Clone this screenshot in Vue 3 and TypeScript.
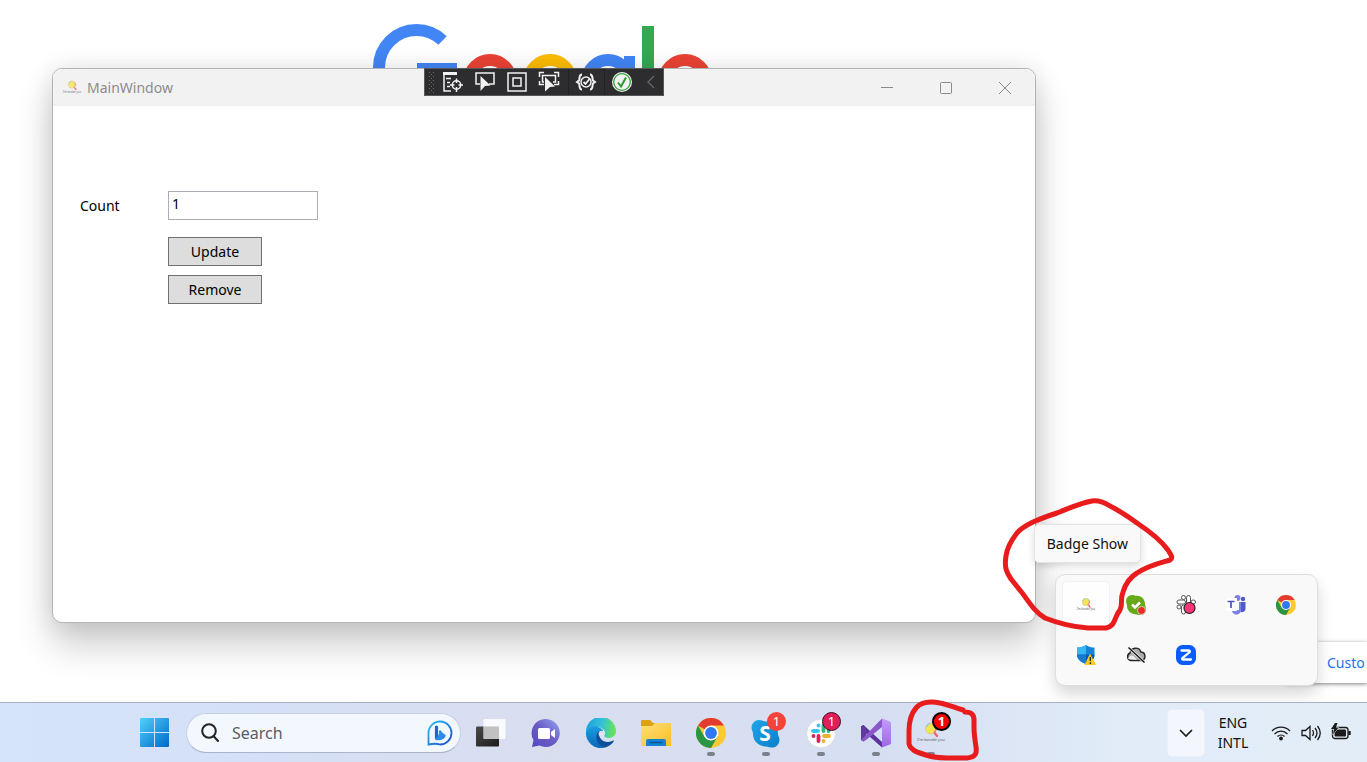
<script setup lang="ts">
import { ref } from 'vue'

const count = ref('1')
const applied = ref('1')

function update(): void {
  applied.value = count.value
}

function remove(): void {
  applied.value = ''
}
</script>

<template>
  <div class="screen">
    <svg class="defs" width="0" height="0" aria-hidden="true">
      <defs>
        <linearGradient id="gWin" x1="0" y1="0" x2="1" y2="1"><stop offset="0" stop-color="#4fd0fb" /><stop offset="1" stop-color="#0069c8" /></linearGradient>
        <linearGradient id="gBing" x1="0" y1="0" x2="1" y2="1"><stop offset="0" stop-color="#28c4ee" /><stop offset="1" stop-color="#1c49c9" /></linearGradient>
        <linearGradient id="gChat" x1="0" y1="1" x2="1" y2="0"><stop offset="0" stop-color="#5149c0" /><stop offset=".5" stop-color="#6c5cc6" /><stop offset="1" stop-color="#8fa6f3" /></linearGradient>
        <linearGradient id="gEdge" x1="0" y1=".3" x2="1" y2=".4"><stop offset="0" stop-color="#1f9fe0" /><stop offset=".55" stop-color="#35c3d6" /><stop offset="1" stop-color="#6be650" /></linearGradient>
        <linearGradient id="gEdgeB" x1="0" y1="0" x2="0" y2="1"><stop offset="0" stop-color="#1b9de2" /><stop offset="1" stop-color="#0b66b8" /></linearGradient>
        <linearGradient id="gFold" x1="0" y1="0" x2="1" y2="1"><stop offset="0" stop-color="#ffe07a" /><stop offset="1" stop-color="#fbbd25" /></linearGradient>
        <linearGradient id="gVs" x1="0" y1="0" x2="0" y2="1"><stop offset="0" stop-color="#c39bfa" /><stop offset="1" stop-color="#9c66e6" /></linearGradient>
        <linearGradient id="gSky" x1="0" y1="0" x2="1" y2="1"><stop offset="0" stop-color="#1fa5e8" /><stop offset="1" stop-color="#0a7fcb" /></linearGradient>
        <linearGradient id="gDark" x1="0" y1="0" x2="1" y2="1"><stop offset="0" stop-color="#4a4a4a" /><stop offset="1" stop-color="#1c1c1c" /></linearGradient>
      </defs>
      <symbol id="chrome" viewBox="0 0 30 30">
        <circle cx="15" cy="15" r="15" fill="#fcc934" />
        <path d="M15 15 2 7.500A15 15 0 0 1 28 7.500H15Z" fill="#e33b2e" />
        <path d="M2 7.500A15 15 0 0 0 15 30L21.500 18.700 15 15 8.500 18.700Z" fill="#2a9645" />
        <circle cx="15" cy="15" r="7.500" fill="#fff" />
        <circle cx="15" cy="15" r="5.900" fill="#2f78ee" />
      </symbol>
      <symbol id="lolly" viewBox="0 0 30 22">
        <path d="m18 10 3 4" stroke="#f0626c" stroke-width="2.200" stroke-linecap="round" />
        <circle cx="15" cy="6.500" r="5.500" fill="#f6e64d" stroke="#d8c7a0" />
        <path d="M19.500 4a5.500 5.500 0 0 1-2 7" fill="none" stroke="#ee7b86" stroke-width="1.500" />
        <path d="M10.500 5a5.500 5.500 0 0 1 3.500-3.800" fill="none" stroke="#8fcbe6" stroke-width="1.500" />
      </symbol>
    </svg>

    <main class="desktop">
      <svg class="wordmark" viewBox="0 0 340 92" role="img" aria-label="Google">
        <g fill="none" stroke-width="12">
          <circle cx="46.500" cy="57.500" r="37.500" stroke="#4285f4" pathLength="360" stroke-dasharray="0 120 194 46" />
          <circle cx="120" cy="71" r="21" stroke="#ea4335" />
          <circle cx="180" cy="71" r="21" stroke="#fbbc05" />
          <circle cx="238" cy="71" r="21" stroke="#4285f4" />
          <circle cx="315" cy="71" r="21" stroke="#ea4335" />
        </g>
        <rect x="47" y="53" width="40" height="12" fill="#4285f4" />
        <rect x="254" y="46" width="11" height="40" fill="#4285f4" />
        <rect x="272" y="16" width="12" height="76" fill="#34a853" />
      </svg>

      <section class="window" aria-label="MainWindow">
        <header class="titlebar">
          <svg class="app-icon" viewBox="0 0 30 22"><use href="#lolly" /><text class="motto" x="15" y="19">I'm beside you</text></svg>
          <h1>MainWindow</h1>
          <div class="caption">
            <button type="button" aria-label="Minimize"><svg viewBox="0 0 14 14"><path d="M1 6.500h12" /></svg></button>
            <button type="button" aria-label="Maximize"><svg viewBox="0 0 14 14"><rect x="1.500" y="1.500" width="11" height="11" rx="1" /></svg></button>
            <button type="button" aria-label="Close"><svg viewBox="0 0 14 14"><path d="m1 1 12 12M13 1 1 13" /></svg></button>
          </div>
          <div class="debugbar" role="toolbar" aria-label="Debug tools">
            <svg class="grip" viewBox="0 0 8 24"><path d="M1.500 2v22M5.500 2v22M3.500 4v20" stroke="#68686b" stroke-width="1" stroke-dasharray="1 3" /></svg>
            <button type="button" aria-label="Live visual tree">
              <svg viewBox="0 0 22 22"><path d="M1 1h14v3H1z" fill="#f2f2f2" stroke="none" /><path d="M2 2v18h7M4 7.500h5M5 11.500h3M5 15.500h3" /><circle cx="14.500" cy="14" r="4.200" /><path d="M14.500 7.500v4.500M14.500 16v5M8 14h4.500M16.500 14H21" /></svg>
            </button>
            <button type="button" aria-label="Select element">
              <svg viewBox="0 0 22 22"><path d="M6 13H2V2h18v11h-5" /><path d="m6.500 5 10 9.500-5.500.500-4.500 5z" fill="#f2f2f2" stroke="none" /></svg>
            </button>
            <button type="button" aria-label="Layout adorners">
              <svg viewBox="0 0 22 22"><rect x="2" y="2" width="18" height="18" /><rect x="7" y="7" width="8" height="8" /></svg>
            </button>
            <button type="button" aria-label="Track focused element">
              <svg viewBox="0 0 22 22"><path d="M1.500 6V1.500H6M16 1.500h4.500V6M1.500 10v3.500H6M20.500 10v3.500H16M6 11H4.500V4.500h13V11H15" /><path d="m7 6 10 9.500-5 .500-5 4.500z" fill="#f2f2f2" stroke="none" /></svg>
            </button>
            <i class="divider"></i>
            <button type="button" aria-label="Binding failures">
              <svg viewBox="0 0 22 22"><path d="M7 3.500C3.500 3.500 5 8 4 9.500L2 11l2 1.500c1 1.500-.500 6 3 6M15 3.500c3.500 0 2 4.500 3 6L20 11l-2 1.500c-1 1.500.500 6-3 6" stroke-width="2" /><circle cx="11" cy="11" r="5" /><path d="m8.500 11 2 2 4-5" stroke-width="1.800" /></svg>
            </button>
            <i class="divider"></i>
            <button type="button" aria-label="Hot reload">
              <svg viewBox="0 0 22 22"><circle cx="11" cy="11" r="10" fill="#f2f2f2" stroke="none" /><circle cx="11" cy="11" r="8.300" stroke="#35a13b" stroke-width="1.300" /><path d="m7 11.500 3 4 5-9" stroke="#2d9633" stroke-width="2" /></svg>
            </button>
            <button type="button" class="narrow" aria-label="Collapse toolbar">
              <svg viewBox="0 0 22 22"><path d="m14 5-6 6 6 6" stroke="#68686b" stroke-width="1.300" /></svg>
            </button>
          </div>
        </header>
        <form class="form" @submit.prevent="update">
          <label for="count">Count</label>
          <input id="count" v-model="count" type="text" />
          <button type="submit">Update</button>
          <button type="button" @click="remove">Remove</button>
        </form>
      </section>

      <a class="customize" href="#">Custo</a>

      <section class="tray" aria-label="Hidden icons">
        <button type="button" class="active" aria-label="Badge Show"><svg viewBox="0 0 30 22"><use href="#lolly" /><text class="motto" x="15" y="19">I'm beside you</text></svg></button>
        <button type="button" aria-label="Skype">
          <svg viewBox="0 0 20 20"><path d="M6 0c2 0 3 .8 5 .8 5 0 8 4 8 8.200 0 2 1 3 1 5.500a5.500 5.500 0 0 1-6 5.500c-2 0-2.500-.8-4.500-.8C5 19.200 1 15.500 1 11 1 9 0 8 0 6a6 6 0 0 1 6-6Z" fill="#68a919" /><path d="m6 9.500 3 3L14 7.500" fill="none" stroke="#fff" stroke-width="2.500" /><circle cx="15.500" cy="15.500" r="4" fill="#e82c2c" stroke="#d8e6c3" stroke-width=".8" /></svg>
        </button>
        <button type="button" aria-label="Slack">
          <svg viewBox="0 0 20 20"><g fill="#fff" stroke="#555" stroke-width="1"><rect x="5.500" y=".500" width="4" height="4" rx="2" /><rect x="1" y="5" width="8.500" height="4" rx="2" /><rect x="10.500" y=".500" width="4" height="8.500" rx="2" /><rect x="15" y="5" width="4.500" height="4" rx="2" /><rect x="1" y="10" width="4" height="4" rx="2" /><rect x="5.500" y="10" width="4" height="9" rx="2" /></g><circle cx="13.500" cy="13" r="5.500" fill="#fb3679" stroke="#222" stroke-width="1.200" /></svg>
        </button>
        <button type="button" aria-label="Teams">
          <svg viewBox="0 0 20 20"><circle cx="17" cy="4" r="2.200" fill="#5059c9" /><circle cx="11.500" cy="3" r="3" fill="#7b83eb" /><path d="M14 7h5.500v7a3.500 3.500 0 0 1-4.500 3z" fill="#5059c9" /><path d="M6 7h9v7a4.500 4.500 0 0 1-9 2z" fill="#7b83eb" /><path d="M10 6h3v9H9z" fill="#fff" /><rect width="11" height="13" y="3" rx="1" fill="#fff" /><path d="M1.500 6.500h7M5 6.500V13" stroke="#4b53bc" stroke-width="1.700" /></svg>
        </button>
        <button type="button" aria-label="Chrome"><svg viewBox="0 0 30 30"><use href="#chrome" /></svg></button>
        <button type="button" aria-label="Windows Security">
          <svg viewBox="0 0 20 20"><path d="M10 0c3 2 5.500 2.500 8.500 2.500v7c0 5-4 8-8.500 9.500C5.500 17.500 1 14.500 1 9.500v-7C4 2.500 7 2 10 0Z" fill="#1683d9" /><path d="M10 0v9.500H1v-7C4 2.500 7 2 10 0Z" fill="#35b6f0" /><path d="M10 9.500v9.500C5.500 17.500 1 14.500 1 9.500z" fill="#1579d0" /><path d="M10 9.500h8.500c0 5-4 8-8.500 9.500z" fill="#0759a7" /><path d="m14 8.500 6 11.500H8.500z" fill="#fdc81b" /><path d="M14.300 12v4M14.300 17.300V19" stroke="#222" stroke-width="1.300" /></svg>
        </button>
        <button type="button" aria-label="OneDrive">
          <svg viewBox="0 0 20 20"><path d="M4.500 15.500a4 4 0 0 1-.500-7.500C5 2 13 1.500 15 7a4.300 4.300 0 0 1 .500 8.500z" fill="#ababab" stroke="#222" stroke-width="1.400" /><path d="M2 14c3-6 6-3 9 1z" fill="#ececec" /><path d="m2.500 2.500 16 15" stroke="#f5f5f5" stroke-width="3" /><path d="m2.500 2.500 16 15" stroke="#111" stroke-width="1.400" /></svg>
        </button>
        <button type="button" aria-label="Zoom">
          <svg viewBox="0 0 20 20"><rect width="20" height="20" rx="6.500" fill="#0b5cff" /><path d="M5.500 5.500h7.500q1.500.500.500 1.800L6.500 13q-1 1.500.500 1.500H15" fill="none" stroke="#fff" stroke-width="2.300" stroke-linecap="round" /></svg>
        </button>
      </section>

      <div class="tooltip" role="tooltip">Badge Show</div>

      <svg class="scribble" viewBox="0 0 177 136" aria-hidden="true">
        <path d="M92 5C80 7 70 12 57 17C47 20 40 23 33 26C25 30 20 33 17 37C10 46 7 52 6 60C4 72 7 77 11 83L23 98C31 109 36 117 45 122C60 128 75 131 88 132H106C116 130 114 121 120 114C123 108 120 103 123 96C126 86 132 80 137 77C149 69 160 67 170 64C174 61 170 58 168 54C160 43 149 35 137 27C126 19 118 14 110 10Q101 4 92 5Z" />
      </svg>
    </main>

    <footer class="taskbar">
      <nav class="apps" aria-label="Taskbar">
        <button type="button" class="start" aria-label="Start">
          <svg viewBox="0 0 29 29"><path d="M1 0h13v14H0V1q0-1 1-1ZM15 0h13q1 0 1 1v13H15ZM0 15h14v14H1q-1 0-1-1ZM15 15h14v13q0 1-1 1H15Z" fill="url(#gWin)" /></svg>
        </button>
        <div class="search">
          <svg class="glass" viewBox="0 0 20 20"><circle cx="9" cy="8" r="6.800" /><path d="m13.500 13 4.500 5" stroke-linecap="round" /></svg>
          <input type="search" placeholder="Search" aria-label="Search" />
          <svg class="bing" viewBox="0 0 26 26"><path d="M1.500 24.500V13A11.500 11.500 0 1 1 13 24.500Q9 23 1.500 24.500Z" fill="#f2f8ff" stroke="url(#gBing)" stroke-width="1.800" /><path d="M9.500 7v11" fill="none" stroke="#1c62dc" stroke-width="3.200" stroke-linecap="round" /><path d="M13 11.500q1 2.500 4.500 4-1 4-8 3.500" fill="#2b8be9" stroke="#2b8be9" stroke-width="2.400" stroke-linejoin="round" stroke-linecap="round" /></svg>
        </div>
        <button type="button" aria-label="Task view">
          <svg viewBox="0 0 30 30"><rect x="0" y="8.500" width="23" height="20" rx="1" fill="url(#gDark)" /><rect x="7.500" y="1" width="22" height="20" rx="1" fill="#fff" fill-opacity=".85" /><path d="M7.500 8.500H23V21H7.500z" fill="#b9b9b9" fill-opacity=".8" /></svg>
        </button>
        <button type="button" aria-label="Chat">
          <svg viewBox="0 0 30 30"><path d="M15 1a14 14 0 1 1-6.500 26.500L1 29l1.500-7A14 14 0 0 1 15 1Z" fill="url(#gChat)" /><rect x="7" y="10" width="12" height="11" rx="1.500" fill="#fff" /><path d="m20 14 4-3v9l-4-3z" fill="#fff" /></svg>
        </button>
        <button type="button" aria-label="Edge">
          <svg viewBox="0 0 30 30"><path d="M0 14A15 15 0 0 1 30 13.500c0 4-3.500 6.500-7.500 6.500-3 0-5.500-1-4-3 2-3-1-7-5-7.500C8 8.500 2 11 0 14Z" fill="url(#gEdge)" /><path d="M0 14C2 9.500 8 7.500 12 9c3 1 5 3 5 4-5 0-7.500 5-5 10 1.500 3.500 5 6 7 6.500A15 15 0 0 1 0 14Z" fill="url(#gEdgeB)" /><path d="M13 13c-5 4-3 15 6 16.500 4-1 7-3.500 9-6.500 0-1-1-.5-2 0-6 2.500-14 0-13-10Z" fill="#0d4f9b" /><path d="M12.500 16c.500-3 3-4 5-2.500 1.500 1.500 1.200 3 .700 4-.700 2 2 3.500 5.800 2.800-4.500 1.500-10 .200-11.500-4.300Z" fill="#dbe3f4" /></svg>
        </button>
        <button type="button" aria-label="File Explorer">
          <svg viewBox="0 0 30 30"><path d="M0 3q0-1 1-1h8l3 3h17q1 0 1 1v5H0z" fill="#dda112" /><path d="M0 8h11l3-3h16v23H0z" fill="url(#gFold)" /><path d="M5 28v-5q0-2 2-2h16q2 0 2 2v5z" fill="#1381d4" /><path d="M8.500 24.500h13" stroke="#075795" stroke-width="1.500" /></svg>
        </button>
        <button type="button" class="running" aria-label="Chrome"><svg viewBox="0 0 30 30"><use href="#chrome" /></svg></button>
        <button type="button" class="running" aria-label="Skype">
          <svg viewBox="0 0 30 30"><path d="M8 2c3 0 4 1.500 7 1.500A12.500 12.500 0 0 1 27 16c0 2 1.500 3.500 1.500 6a7.500 7.500 0 0 1-8.500 7.500c-2 0-3-1-5.500-1A12.500 12.500 0 0 1 2 16c0-2.500-1.500-4-1.500-6.500A7.500 7.500 0 0 1 8 2Z" fill="url(#gSky)" /><text x="14" y="23" text-anchor="middle" class="s-mark">S</text></svg>
          <span class="badge skype">1</span>
        </button>
        <button type="button" class="running" aria-label="Slack">
          <svg viewBox="0 0 30 30"><circle cx="15" cy="15.500" r="14.300" fill="#fff" stroke="#d9d9df" stroke-width=".7" /><g stroke-width="3.800" stroke-linecap="round"><path d="M7 13h5M12.500 7.500v.1" stroke="#36c5f0" /><path d="M17.500 7.500V13M22.500 13v.1" stroke="#2eb67d" /><path d="M18 18h5M17.500 23v.1" stroke="#ecb22e" /><path d="M12.500 18v5M7.500 18v.1" stroke="#e01e5a" /></g></svg>
          <span class="badge slack">1</span>
        </button>
        <button type="button" class="running" aria-label="Visual Studio">
          <svg viewBox="0 0 30 30"><path d="M0 8.500 2.500 7 21 24v5.500L0 11z" fill="#5e33a0" /><path d="M0 8.500v13.500L2.500 23.500 5 21V9.500L2.500 7Z" fill="#603aa2" /><path d="M2.500 23.500 0 22 21 .500V9L5 22Z" fill="#8a59c9" /><path d="m21 .500 8 3q1 .5 1 1.500v20q0 1-1 1.500l-8 3z" fill="url(#gVs)" /></svg>
        </button>
        <button type="button" class="running" aria-label="MainWindow">
          <svg class="beside" viewBox="0 0 30 22"><use href="#lolly" /><text class="motto" x="15" y="19">I'm beside you</text></svg>
          <span class="badge own">1</span>
          <svg class="circled" viewBox="0 0 78 66" aria-hidden="true"><path d="M60 13C50 10 43 7 37 6C24 3 16 7 13 11C7 18 6 26 6 34V47C8 55 18 56 26 59C38 62 52 61 64 61C73 60 74 56 73 50C72 43 71 37 71 31V23C71 17 68 15 62 15" /></svg>
        </button>
      </nav>
      <div class="status">
        <button type="button" class="chevron" aria-label="Show hidden icons"><svg viewBox="0 0 16 16"><path d="m2 5 6 6 6-6" /></svg></button>
        <button type="button" class="lang">ENG<br />INTL</button>
        <button type="button" class="system" aria-label="Network, volume, battery">
          <svg viewBox="0 0 20 20"><path d="M1 8a12.500 12.500 0 0 1 18 0M3.500 11a9 9 0 0 1 13 0M6.500 13.500a5 5 0 0 1 7 0" /><circle cx="10" cy="15.500" r="1.900" fill="#1b1b1b" stroke="none" /></svg>
          <svg viewBox="0 0 20 20"><path d="M1 7.500h3.500L9 3.500v13l-4.500-4H1zM11.500 7q2 3 0 6M14 5q4 5 0 10M16.500 3q5.500 7 0 14" /></svg>
          <svg viewBox="0 0 20 20"><rect x="1.500" y="4.500" width="15.500" height="11" rx="2.500" /><rect x="3.500" y="6.500" width="11.500" height="7" rx="1" fill="#1b1b1b" stroke="none" /><path d="M18.500 8v4" stroke-width="2.400" /><path d="M4 0 0 6h3l-1 5.500L7.500 4.500H5L6.500 0Z" fill="#1b1b1b" stroke="#e1ecf8" stroke-width="1" paint-order="stroke" /></svg>
        </button>
      </div>
    </footer>
  </div>
</template>

<style>
body {
  margin: 0;
}
</style>

<style scoped>
.screen {
  display: flex;
  flex-direction: column;
  min-height: 100vh;
  overflow: hidden;
  background: #fff;
  color: #111;
  font: 14px/20px "Noto Sans", "Open Sans", sans-serif;
}
.screen * {
  box-sizing: border-box;
}
button,
input {
  font: inherit;
  color: inherit;
  margin: 0;
}
button {
  padding: 0;
  border: 0;
  background: none;
}
svg {
  display: block;
}
.defs {
  position: absolute;
}
.motto {
  font-size: 4px;
  fill: #555;
  text-anchor: middle;
}
.desktop {
  position: relative;
  flex: 1;
}
.wordmark {
  position: absolute;
  left: 370px;
  top: 10px;
  width: 340px;
}
.window {
  position: absolute;
  inset: 68px 331px 79px 52px;
  border: 1px solid #b4b4b4;
  border-radius: 10px;
  background: #fff;
  box-shadow: 0 22px 36px rgba(0, 0, 0, 0.2), 0 0 24px rgba(0, 0, 0, 0.1);
}
.titlebar {
  position: relative;
  display: flex;
  align-items: center;
  height: 37px;
  padding-left: 9px;
  border-radius: 9px 9px 0 0;
  background: #f2f2f2;
}
.app-icon {
  width: 20px;
  height: 15px;
  opacity: 0.8;
}
h1 {
  margin: 0 0 0 5px;
  font-size: 14px;
  font-weight: 400;
  color: #8d8d8d;
}
.caption {
  display: flex;
  align-self: stretch;
  margin-left: auto;
  margin-right: 1px;
}
.caption button {
  display: grid;
  place-items: center;
  width: 59px;
}
.caption svg {
  width: 14px;
  height: 14px;
  fill: none;
  stroke: #8a8a8a;
}
.debugbar {
  position: absolute;
  top: -1px;
  left: 50%;
  display: flex;
  align-items: center;
  width: 240px;
  height: 28px;
  padding-left: 3px;
  border: 1px solid #58585b;
  background: #2d2d30;
  transform: translateX(-50%);
}
.debugbar .grip {
  flex: none;
  width: 8px;
  height: 24px;
  margin-right: 1px;
}
.debugbar button {
  display: grid;
  place-items: center;
  width: 32px;
  flex: none;
}
.debugbar button svg {
  width: 22px;
  height: 22px;
  fill: none;
  stroke: #f2f2f2;
  stroke-width: 1.500;
}
.debugbar .narrow {
  width: 26px;
}
.divider {
  flex: none;
  width: 1px;
  height: 26px;
  margin: 0 1px 0 3px;
  background: #222224;
}
.divider ~ .divider {
  margin-left: 2px;
}
.form {
  display: grid;
  grid-template-columns: 88px 150px;
  justify-content: start;
  padding: 85px 27px;
  color: #000;
}
.form label {
  align-self: center;
}
.form input {
  height: 29px;
  padding: 0 3px 5px;
  border: 1px solid #abadb3;
  border-radius: 0;
  background: #fff;
  outline: 0;
}
.form button {
  grid-column: 2;
  width: 94px;
  height: 29px;
  margin-top: 9px;
  border: 1px solid #707070;
  background: #ddd;
}
.form input + button {
  margin-top: 17px;
}
.customize {
  position: absolute;
  right: 0;
  bottom: 19px;
  width: 80px;
  padding: 11px 0 10px 40px;
  background: #fff;
  box-shadow: 0 1px 4px rgba(0, 0, 0, 0.5);
  color: #1a73e8;
  text-decoration: none;
}
.tray {
  position: absolute;
  right: 49px;
  bottom: 16px;
  display: grid;
  grid-template-columns: repeat(5, 50px);
  grid-auto-rows: 50px;
  padding: 5px 6px 5px 5px;
  border: 1px solid #dedede;
  border-radius: 10px;
  background: #f9f9f9;
  box-shadow: 0 8px 16px rgba(0, 0, 0, 0.16);
}
.tray button {
  display: grid;
  place-items: center;
  margin: 1px;
  border: 1px solid transparent;
  border-radius: 5px;
}
.tray .active {
  border-color: #f1f1f1;
  background: #fefefe;
}
.tray svg {
  width: 20px;
  height: 20px;
}
.tooltip {
  position: absolute;
  right: 226px;
  bottom: 139px;
  padding: 9px 12px 8px;
  border: 1px solid #e4e4e4;
  border-radius: 5px;
  background: #f9f9f9;
  box-shadow: 0 3px 7px rgba(0, 0, 0, 0.15);
}
.scribble {
  position: absolute;
  right: 190px;
  bottom: 70px;
  width: 177px;
  height: 136px;
}
.scribble path,
.circled path {
  fill: none;
  stroke: #e81c1c;
  stroke-width: 5;
  stroke-linecap: round;
  stroke-linejoin: round;
}
.taskbar {
  position: relative;
  display: flex;
  justify-content: space-between;
  height: 60px;
  padding: 0 12px 0 127px;
  border-top: 1px solid #a9afbf;
  background: linear-gradient(90deg, #d5e4fb 0%, #d5e0f6 20%, #d9deef 40%, #d6dff2 65%, #e1ecf8 82%, #e2edf8 100%);
}
.apps {
  display: flex;
  align-items: center;
}
.apps button {
  position: relative;
  display: grid;
  place-items: center;
  width: 55px;
  height: 59px;
}
.apps button > svg {
  width: 30px;
  height: 30px;
}
.apps .start {
  justify-items: start;
  width: 59px;
  padding-left: 13px;
}
.apps .start > svg {
  width: 29px;
  height: 29px;
}
.search {
  display: flex;
  align-items: center;
  width: 275px;
  height: 40px;
  margin-right: 2px;
  padding: 0 7px 0 13px;
  border: 1px solid #c6cfe2;
  border-bottom-color: #abb4c8;
  border-radius: 20px;
  background: #f3f7fe;
}
.search input {
  flex: 1;
  min-width: 0;
  padding: 0 0 0 12px;
  border: 0;
  outline: 0;
  background: none;
  font-size: 16px;
}
.search input::placeholder {
  color: #5b5d62;
  opacity: 1;
}
.glass {
  width: 20px;
  height: 20px;
  fill: none;
  stroke: #222;
  stroke-width: 2;
}
.bing {
  width: 26px;
  height: 26px;
}
.running::after {
  content: "";
  position: absolute;
  bottom: 6px;
  left: 24px;
  width: 8px;
  height: 4px;
  border-radius: 2px;
  background: #7b808b;
}
.s-mark {
  font: 700 21px "Open Sans", sans-serif;
  fill: #fff;
}
.badge {
  position: absolute;
  top: 9px;
  right: 7px;
  width: 19px;
  height: 19px;
  border-radius: 50%;
  background: #f4433a;
  color: #fff;
  font-size: 13px;
  line-height: 19px;
  text-align: center;
}
.badge.slack {
  border: 1px solid #401020;
  background: #e01e5a;
  line-height: 17px;
}
.badge.own {
  border: 2px solid #000;
  background: #f00;
  font-weight: 700;
  line-height: 15px;
}
.apps .beside {
  height: 22px;
}
.apps button > .circled {
  position: absolute;
  top: -6px;
  left: 0;
  z-index: 1;
  width: 78px;
  height: 66px;
}
.status {
  display: flex;
  align-items: center;
}
.chevron {
  display: grid;
  place-items: center;
  width: 38px;
  height: 48px;
  border: 1px solid #eaf0fa;
  border-radius: 5px;
  background: #f3f7fd;
}
.chevron svg {
  width: 16px;
  height: 16px;
  fill: none;
  stroke: #1b1b1b;
  stroke-width: 1.600;
}
.lang {
  width: 56px;
}
.system {
  display: flex;
  gap: 10px;
  margin-left: 10px;
  margin-right: 4px;
}
.system svg {
  width: 20px;
  height: 20px;
  fill: none;
  stroke: #1b1b1b;
  stroke-width: 1.300;
}
</style>
